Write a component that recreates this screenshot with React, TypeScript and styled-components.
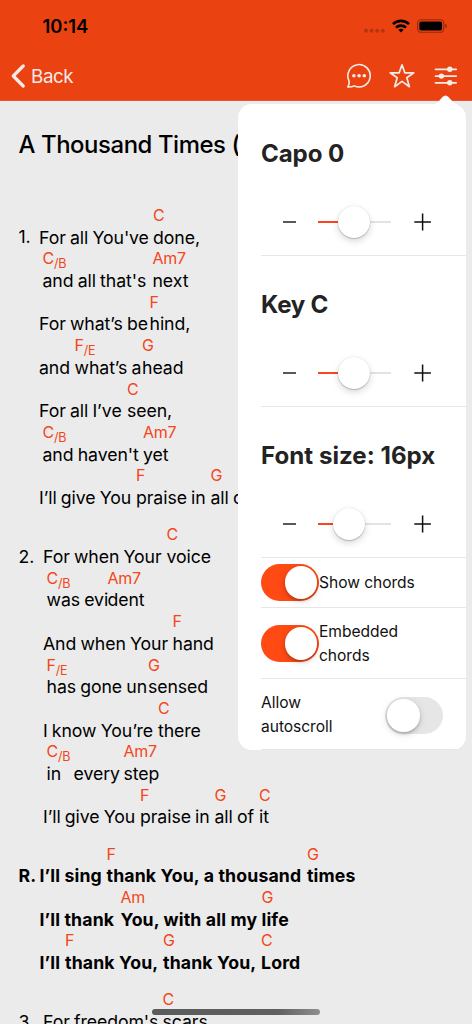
import React from 'react';
import styled, { createGlobalStyle, css } from 'styled-components';

const GlobalStyle = createGlobalStyle`
  *, *::before, *::after { box-sizing: border-box; }
  html, body { margin: 0; padding: 0; background: #ebebeb; }
  body { font-family: Inter, "Liberation Sans", sans-serif; overflow: hidden; }
`;

const Screen = styled.div`
  position: relative;
  width: 472px;
  height: 1024px;
  overflow: hidden;
  background: #ebebeb;
  color: #000;
`;

const Header = styled.header`
  height: 101px;
  background: #eb4211;
  border-bottom: 1px solid #e8572f;
`;

const StatusBar = styled.div`
  display: flex;
  align-items: center;
  justify-content: space-between;
  height: 51px;
  padding: 1px 25px 0 42.5px;
`;

const Clock = styled.span`
  font-size: 18.4px;
  font-weight: 600;
  letter-spacing: 0;
`;

const NavBar = styled.nav`
  display: flex;
  align-items: center;
  height: 50px;
  padding: 0 14px 0 11px;
`;

const BackButton = styled.div`
  display: flex;
  align-items: center;
  gap: 6px;
  flex: 1;
  color: #f2ebe9;
  font-size: 18.8px;
  letter-spacing: -0.4px;
`;

const NavIcons = styled.div`
  display: flex;
  align-items: center;
  gap: 17.3px;

  & > :last-child {
    margin-left: 1.4px;
  }
`;

const Song = styled.main`
  padding: 26px 0 0 18.5px;
`;

const SongTitle = styled.h1`
  margin: 0 0 45px;
  height: 33px;
  font-size: 23.9px;
  line-height: 35px;
  font-weight: 500;
  letter-spacing: -0.42px;
  white-space: nowrap;
`;

const Verse = styled.section<{ $bold?: boolean }>`
  display: flex;
  margin-bottom: 15.6px;
  font-weight: ${(p) => (p.$bold ? 700 : 400)};
  font-size: 17.7px;
  letter-spacing: ${(p) => (p.$bold ? '0.14px' : '-0.08px')};
  word-spacing: ${(p) => (p.$bold ? '0' : '-0.7px')};
`;

const VerseLabel = styled.div<{ $width: number }>`
  flex: none;
  width: ${(p) => p.$width}px;
  padding-top: 21.2px;
  line-height: 21.7px;
  white-space: nowrap;
`;

const Lines = styled.div`
  display: flex;
  flex-direction: column;
`;

const Line = styled.div<{ $indent: number }>`
  display: flex;
  height: 43.4px;
  padding-left: ${(p) => p.$indent}px;
`;

const Segment = styled.div<{ $width?: number }>`
  flex: none;
  width: ${(p) => (p.$width ? `${p.$width}px` : 'auto')};
  white-space: pre;
`;

const Chord = styled.div`
  height: 21.7px;
  line-height: 21.7px;
  font-size: 16px;
  font-weight: 400;
  letter-spacing: -0.3px;
  color: #f4461a;
`;

const Bass = styled.span`
  position: relative;
  top: 4px;
  font-size: 12.6px;
`;

const Lyric = styled.div`
  height: 21.7px;
  line-height: 22.4px;
`;

const Popover = styled.aside`
  position: absolute;
  left: 238px;
  top: 104px;
  width: 228px;
  height: 646px;
`;

const Arrow = styled.svg`
  position: absolute;
  right: 4px;
  top: -9px;
`;

const Panel = styled.div`
  height: 100%;
  padding-left: 23px;
  border-radius: 14px;
  overflow: hidden;
  background: #fff;
`;

const rowBorder = css`
  border-bottom: 1px solid #e6e6e6;
`;

const SliderRow = styled.div`
  height: 151px;
  padding-top: 31px;
  ${rowBorder}

  &:first-child {
    height: 152px;
    padding-top: 32px;
  }
`;

const RowTitle = styled.h2<{ $spacing: number }>`
  margin: 0;
  height: 36px;
  line-height: 36px;
  color: #232323;
  font-size: 24.1px;
  font-weight: 700;
  letter-spacing: ${(p) => p.$spacing}px;
  white-space: nowrap;
`;

const SliderControls = styled.div`
  display: flex;
  align-items: center;
  justify-content: space-between;
  height: 36px;
  margin-top: 32px;
  padding: 0 34px 0 21px;
`;

const Track = styled.div<{ $fill: number }>`
  position: relative;
  left: -1.2px;
  width: 73px;
  height: 2.4px;
  background: linear-gradient(to right, #fb4520 ${(p) => p.$fill}px, #e3e3e3 ${(p) => p.$fill}px);
`;

const Thumb = styled.span<{ $center: number }>`
  position: absolute;
  left: ${(p) => p.$center - 16}px;
  top: -15px;
  width: 32px;
  height: 32px;
  border-radius: 50%;
  background: #fff;
  box-shadow: 0 0 1px rgba(0, 0, 0, 0.16), 0 1px 1px rgba(0, 0, 0, 0.18), 0 3px 7px rgba(0, 0, 0, 0.16);
`;

const ToggleRow = styled.div<{ $height: number; $top?: number; $spread?: boolean }>`
  display: flex;
  align-items: center;
  justify-content: ${(p) => (p.$spread ? 'space-between' : 'flex-start')};
  height: ${(p) => p.$height}px;
  padding-right: ${(p) => (p.$spread ? 23 : 0)}px;
  padding-top: ${(p) => p.$top ?? 0}px;
  ${rowBorder}
`;

const ToggleLabel = styled.span`
  width: 110px;
  color: #111;
  font-size: 15.6px;
  line-height: 24px;
  letter-spacing: -0.05px;
`;

const Switch = styled.span<{ $on?: boolean }>`
  display: flex;
  flex: none;
  align-items: center;
  justify-content: ${(p) => (p.$on ? 'flex-end' : 'flex-start')};
  width: 58px;
  height: 37px;
  padding: 0 2px;
  border-radius: 19px;
  background: ${(p) => (p.$on ? '#ff4a14' : '#e6e6e6')};
`;

const Knob = styled.span`
  width: 32.5px;
  height: 32.5px;
  border-radius: 50%;
  background: #fff;
  box-shadow: 0 2px 3px rgba(0, 0, 0, 0.2), 0 2px 9px rgba(0, 0, 0, 0.12);
`;

const HomeIndicator = styled.div`
  position: absolute;
  left: 152px;
  top: 1008.5px;
  width: 168px;
  height: 6px;
  border-radius: 3px;
  background: linear-gradient(to right, #5a5c5b, #5f605f 75%, #8f8f8f);
`;

type Seg = { text: string; width?: number; chord?: string; bass?: string };
type SongLine = { indent?: number; segs: Seg[] };
type VerseData = { label: string; labelWidth: number; bold?: boolean; lines: SongLine[] };

const verses: VerseData[] = [
  {
    label: '1.',
    labelWidth: 20.5,
    lines: [
      { segs: [{ text: 'For all You\'ve ', width: 114 }, { text: 'done,', chord: 'C' }] },
      { indent: 3.5, segs: [{ text: 'and all that\'s ', width: 110, chord: 'C', bass: '/B' }, { text: 'next', chord: 'Am7' }] },
      { segs: [{ text: 'For what’s be', width: 110.5 }, { text: 'hind,', chord: 'F' }] },
      { segs: [{ text: 'and ', width: 35.5 }, { text: 'what’s a', width: 67.5, chord: 'F', bass: '/E' }, { text: 'head', chord: 'G' }] },
      { segs: [{ text: 'For all I’ve ', width: 88 }, { text: 'seen,', chord: 'C' }] },
      { indent: 3.5, segs: [{ text: 'and haven\'t ', width: 100.5, chord: 'C', bass: '/B' }, { text: 'yet', chord: 'Am7' }] },
      { segs: [{ text: 'I’ll give You ', width: 97 }, { text: 'praise in ', width: 74.5, chord: 'F' }, { text: 'all of it', chord: 'G' }] },
    ],
  },
  {
    label: '2.',
    labelWidth: 24.5,
    lines: [
      { segs: [{ text: 'For when Your ', width: 123.5 }, { text: 'voice', chord: 'C' }] },
      { indent: 3.5, segs: [{ text: 'was evi', width: 61, chord: 'C', bass: '/B' }, { text: 'dent', chord: 'Am7' }] },
      { segs: [{ text: 'And when Your ', width: 129.5 }, { text: 'hand', chord: 'F' }] },
      { indent: 3.5, segs: [{ text: 'has gone un', width: 101.5, chord: 'F', bass: '/E' }, { text: 'sensed', chord: 'G' }] },
      { segs: [{ text: 'I know You’re ', width: 115 }, { text: 'there', chord: 'C' }] },
      { indent: 3.5, segs: [{ text: 'in ', width: 27, chord: 'C', bass: '/B' }, { text: 'every ', width: 50 }, { text: 'step', chord: 'Am7' }] },
      { segs: [{ text: 'I’ll give You ', width: 97 }, { text: 'praise in ', width: 74.5, chord: 'F' }, { text: 'all of ', width: 44.5, chord: 'G' }, { text: 'it', chord: 'C' }] },
    ],
  },
  {
    label: 'R.',
    labelWidth: 21,
    bold: true,
    lines: [
      { segs: [{ text: 'I’ll sing ', width: 67 }, { text: 'thank You, a thousand ', width: 200.5, chord: 'F' }, { text: 'times', chord: 'G' }] },
      { segs: [{ text: 'I’ll thank ', width: 81 }, { text: 'You, with all my ', width: 141, chord: 'Am' }, { text: 'life', chord: 'G' }] },
      { segs: [{ text: 'I’ll ', width: 25.5 }, { text: 'thank You, ', width: 98, chord: 'F' }, { text: 'thank You, ', width: 98, chord: 'G' }, { text: 'Lord', chord: 'C' }] },
    ],
  },
  {
    label: '3.',
    labelWidth: 24.5,
    lines: [{ segs: [{ text: 'For freedom\'s ', width: 119.5 }, { text: 'scars', chord: 'C' }] }],
  },
];

const StatusIcons = () => (
  <svg width="84" height="18" viewBox="363 17 84 18">
    <g fill="#b8330f">
      <circle cx="366" cy="30.7" r="2" />
      <circle cx="371.6" cy="30.7" r="2" />
      <circle cx="377.2" cy="30.7" r="2" />
      <circle cx="382.8" cy="30.7" r="2" />
    </g>
    <g fill="none" stroke="#000" strokeWidth="2.6">
      <path d="M393 24.1A11.6 11.6 0 0 1 409 24.1" />
      <path d="M396 27.6A7.2 7.2 0 0 1 406 27.6" />
    </g>
    <path d="M398.4 29.7A4.2 4.2 0 0 1 403.6 29.7L401 32.4Z" />
    <rect x="417.6" y="19.7" width="26.2" height="12.6" rx="3.6" fill="none" stroke="#94290c" strokeWidth="1.1" />
    <rect x="419.3" y="21.4" width="22.8" height="9.2" rx="2" />
    <path d="M445.1 23.8Q447 24.5 447 26Q447 27.5 445.1 28.2Z" fill="#94290c" />
  </svg>
);

const BackChevron = () => (
  <svg width="14" height="26" viewBox="0 0 14 26" fill="none" stroke="#f2ebe9" strokeWidth="3.2" strokeLinecap="round" strokeLinejoin="round">
    <path d="M12.2 3L2.3 13L12.2 23" />
  </svg>
);

const ChatIcon = () => (
  <svg width="26" height="26" viewBox="0 0 26 26">
    <path d="M2.9 17.6A11.2 11.2 0 1 1 8.2 22.9Q5.3 24.1 1.8 23.9Q3.7 21.3 2.9 17.6Z" fill="none" stroke="#f3ece9" strokeWidth="1.6" strokeLinejoin="round" />
    <g fill="#f3ece9">
      <circle cx="7.9" cy="12.8" r="1.8" />
      <circle cx="13.1" cy="12.8" r="1.8" />
      <circle cx="18.3" cy="12.8" r="1.8" />
    </g>
  </svg>
);

const StarIcon = () => (
  <svg width="26" height="26" viewBox="0 0 26 26" fill="none" stroke="#f3ece9" strokeWidth="1.7" strokeLinejoin="round">
    <path d="M13 1.8L15.8 9.8H24.8L17.8 14.8L20.4 23.7L13 18.4L5.6 23.7L8.2 14.8L1.2 9.8H10.2Z" />
  </svg>
);

const SettingsIcon = () => (
  <svg width="24" height="26" viewBox="0 0 24 26" stroke="#f3ece9" strokeWidth="1.7" strokeLinecap="round">
    <path d="M1.5 6.3H22.2M1.5 13.1H22.2M1.5 19.8H22.2" />
    <g fill="#f3ece9" stroke="none">
      <circle cx="15.8" cy="6.3" r="2.7" />
      <circle cx="7.4" cy="13.1" r="2.7" />
      <circle cx="15.8" cy="19.8" r="2.7" />
    </g>
  </svg>
);

const Minus = () => (
  <svg width="15" height="20" viewBox="0 0 15 20">
    <path d="M1 10H14" stroke="#222" strokeWidth="1.5" />
  </svg>
);

const Plus = () => (
  <svg width="18" height="20" viewBox="0 0 18 20">
    <path d="M.3 10H16.9M8.6 1.6V18.4" stroke="#111" strokeWidth="1.5" />
  </svg>
);

const SliderSetting = ({ title, value, spacing }: { title: string; value: number; spacing: number }) => (
  <SliderRow>
    <RowTitle $spacing={spacing}>{title}</RowTitle>
    <SliderControls>
      <Minus />
      <Track $fill={value}>
        <Thumb $center={value} />
      </Track>
      <Plus />
    </SliderControls>
  </SliderRow>
);

export default function App() {
  return (
    <Screen>
      <GlobalStyle />
      <Header>
        <StatusBar>
          <Clock>10:14</Clock>
          <StatusIcons />
        </StatusBar>
        <NavBar>
          <BackButton>
            <BackChevron />
            Back
          </BackButton>
          <NavIcons>
            <ChatIcon />
            <StarIcon />
            <SettingsIcon />
          </NavIcons>
        </NavBar>
      </Header>

      <Song>
        <SongTitle>A Thousand Times (</SongTitle>
        {verses.map((verse) => (
          <Verse key={verse.label} $bold={verse.bold}>
            <VerseLabel $width={verse.labelWidth}>{verse.label}</VerseLabel>
            <Lines>
              {verse.lines.map((line, i) => (
                <Line key={i} $indent={line.indent ?? 0}>
                  {line.segs.map((seg, j) => (
                    <Segment key={j} $width={seg.width}>
                      <Chord>
                        {seg.chord}
                        {seg.bass && <Bass>{seg.bass}</Bass>}
                      </Chord>
                      <Lyric>{seg.text}</Lyric>
                    </Segment>
                  ))}
                </Line>
              ))}
            </Lines>
          </Verse>
        ))}
      </Song>

      <Popover>
        <Arrow width="32" height="10" viewBox="0 0 32 10">
          <path d="M2 10Q6 9 8.5 6.5L12.5 2Q15.5-1.2 18.5 2L22.5 6.5Q25 9 29 10Z" fill="#fff" />
        </Arrow>
        <Panel>
          <SliderSetting title="Capo 0" value={36.5} spacing={-0.1} />
          <SliderSetting title="Key C" value={36.5} spacing={-0.25} />
          <SliderSetting title="Font size: 16px" value={31} spacing={0.03} />
          <ToggleRow $height={50}>
            <Switch $on>
              <Knob />
            </Switch>
            <ToggleLabel>Show chords</ToggleLabel>
          </ToggleRow>
          <ToggleRow $height={71.4} $top={1}>
            <Switch $on>
              <Knob />
            </Switch>
            <ToggleLabel>Embedded chords</ToggleLabel>
          </ToggleRow>
          <ToggleRow $height={71} $top={2} $spread>
            <ToggleLabel>Allow autoscroll</ToggleLabel>
            <Switch>
              <Knob />
            </Switch>
          </ToggleRow>
        </Panel>
      </Popover>
      <HomeIndicator />
    </Screen>
  );
}
